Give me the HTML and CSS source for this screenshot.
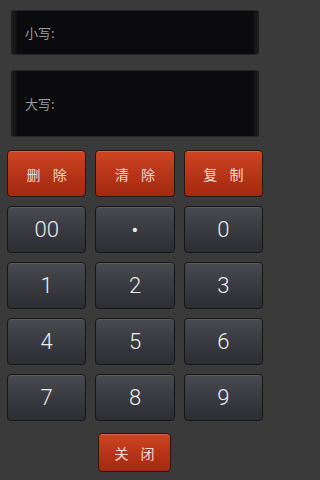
FILE: index.html
```
<!DOCTYPE html>
<html lang="zh">
<head>
<meta charset="utf-8">
<link rel="stylesheet" href="styles.css">
</head>
<body>
<div class="app">
  <div class="display small"><span class="label">小写:</span></div>
  <div class="display big"><span class="label">大写:</span></div>
  <div class="pad">
    <div class="key red">删 除</div>
    <div class="key red">清 除</div>
    <div class="key red">复 制</div>
    <div class="key">00</div>
    <div class="key dot">•</div>
    <div class="key">0</div>
    <div class="key">1</div>
    <div class="key">2</div>
    <div class="key">3</div>
    <div class="key">4</div>
    <div class="key">5</div>
    <div class="key">6</div>
    <div class="key">7</div>
    <div class="key">8</div>
    <div class="key">9</div>
  </div>
  <div class="footer"><div class="key red close">关 闭</div></div>
</div>
</body>
</html>
```
FILE: styles.css
```
html, body {
  margin: 0;
  padding: 0;
  background: #3a3a3a;
}
.app {
  width: 270px;
  height: 480px;
  box-sizing: border-box;
  padding: 10px 0 0;
  display: flex;
  flex-direction: column;
  font-family: "Noto Sans CJK SC", "Noto Sans", sans-serif;
}
.display {
  margin: 0 11px;
  box-sizing: border-box;
  border-radius: 3px;
  background:
    linear-gradient(90deg, #1e1e1f 0, #141415 5px, #0b0b0d 6px, #0b0b0d calc(100% - 6px), #141415 calc(100% - 5px), #1e1e1f 100%);
  border-top: 1px solid #232324;
  border-bottom: 1px solid #262627;
  display: flex;
  align-items: center;
  padding-left: 14px;
}
.display.small { height: 45px; }
.display.big { height: 67px; margin-top: 15px; }
.label {
  color: #9c9c9c;
  font-size: 13px;
  line-height: 1;
}
.pad {
  margin-top: 13px;
  padding: 0 7px 0 7px;
  display: grid;
  grid-template-columns: repeat(3, 1fr);
  grid-auto-rows: 47px;
  gap: 9px;
}
.key {
  box-sizing: border-box;
  border-radius: 4px;
  border: 1.5px solid #151516;
  background: linear-gradient(180deg, #4a4b51 0%, #3b3c41 45%, #2d2e33 100%);
  box-shadow: inset 0 1px 0 rgba(255,255,255,0.10);
  display: flex;
  align-items: center;
  justify-content: center;
  color: #ececec;
  font-family: Roboto, "Noto Sans", sans-serif;
  font-weight: 300;
  font-size: 22px;
}
.key.dot { font-size: 20px; font-weight: 400; }
.key.red {
  border-color: #2a140e;
  background: linear-gradient(180deg, #cd4522 0%, #b83519 50%, #a2290f 100%);
  box-shadow: inset 0 1px 0 rgba(255,200,170,0.25);
  color: #f3dcd3;
  font-family: "Noto Sans CJK SC", sans-serif;
  font-weight: 400;
  font-size: 14px;
  word-spacing: 9px;
}
.footer {
  margin-top: 12px;
  display: flex;
  justify-content: center;
}
.key.close {
  width: 73px;
  height: 39px;
  margin-left: -1px;
}
```
